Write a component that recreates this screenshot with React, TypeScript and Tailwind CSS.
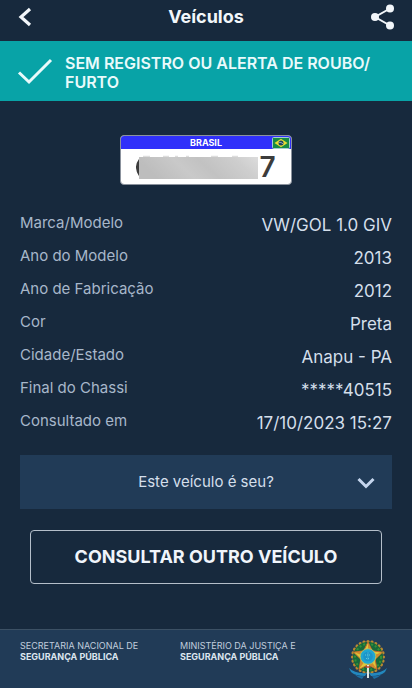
const details = [
  { label: "Marca/Modelo", value: "VW/GOL 1.0 GIV" },
  { label: "Ano do Modelo", value: "2013" },
  { label: "Ano de Fabricação", value: "2012" },
  { label: "Cor", value: "Preta" },
  { label: "Cidade/Estado", value: "Anapu - PA" },
  { label: "Final do Chassi", value: "*****40515" },
  { label: "Consultado em", value: "17/10/2023 15:27" },
]

function BrazilFlag() {
  return (
    <svg viewBox="0 0 18 12" className="h-3 w-[18px]" aria-hidden="true">
      <rect x="0.5" y="0.5" width="17" height="11" rx="1" fill="#168b45" stroke="#a5cdd0" />
      <path d="M9 1.8 15.5 6 9 10.2 2.5 6Z" fill="#e5dc35" />
      <circle cx="9" cy="6" r="2.5" fill="#1d4260" />
      <path d="M6.8 5.3q2.5-.3 4.3 1.6" fill="none" stroke="#cfe0e8" strokeWidth="0.6" />
    </svg>
  )
}

function CoatOfArms() {
  const beads = Array.from({ length: 24 }, (_, i) => i * 15)

  return (
    <svg viewBox="0 0 40 42" className="h-[42px] w-10" role="img" aria-label="Brasão da República">
      {beads.map((angle) => (
        <circle key={angle} cx="20" cy="3.5" r="1.6" fill="#b98a2f" transform={`rotate(${angle} 20 19)`} />
      ))}
      <circle cx="20" cy="19" r="15" fill="#17693a" />
      <circle cx="20" cy="19" r="13" fill="none" stroke="#348f38" strokeWidth="2" strokeDasharray="2 2" />
      <path d="M20 4 24.3 12.8 34.5 14.2 27.2 21.3 29 31.5 20 26.8 11 31.5 12.8 21.3 5.5 14.2 15.7 12.8Z" fill="#dfc73a" stroke="#c0652c" strokeWidth="1" />
      <path d="M20 5 20 19 24.3 12.8ZM33.5 14.5 20 19 27.2 21.3ZM28.5 30.5 20 19 20 26.8ZM11.5 30.5 20 19 12.8 21.3ZM6.5 14.5 20 19 15.7 12.8Z" fill="#d08a2d" />
      <circle cx="20" cy="18.5" r="7.8" fill="#20a6d2" stroke="#b8c85a" strokeWidth="0.8" />
      <circle cx="20" cy="18.5" r="4.8" fill="#1c94c8" />
      <path d="M20 14.5v8M17 17h6M18 20.5h4" stroke="#5cc8dc" strokeWidth="1" strokeDasharray="1 1" />
      <path d="M1 30q6 6 18 5l-2 3Q7 38 3 34ZM39 30q-6 6-18 5l2 3q10 0 14-4Z" fill="#2388bd" />
      <path d="M6 36q5 3 10 2l-2 3q-4-1-8-5ZM34 36q-5 3-10 2l2 3q4-1 8-5Z" fill="#1c70a5" />
      <path d="M20 27v13" stroke="#dde7e6" strokeWidth="2" />
      <path d="M17.5 29h5" stroke="#c94932" strokeWidth="1.5" />
    </svg>
  )
}

function LicensePlate() {
  return (
    <div className="mx-auto h-[50px] w-[172px] overflow-hidden rounded border border-[#8b929d] bg-white">
      <div className="grid h-[13px] grid-cols-[1fr_auto_1fr] items-center bg-[#3030fa]">
        <span className="col-start-2 text-[9px] leading-3 font-bold text-white">BRASIL</span>
        <div className="flex justify-end pr-px">
          <BrazilFlag />
        </div>
      </div>
      <div className="flex h-9 items-center justify-end pr-[14px] text-[#3c3c3c]">
        <svg viewBox="0 0 122 30" className="h-[30px] w-[122px]" aria-hidden="true">
          <defs>
            <linearGradient id="plateMask" x1="0" x2="1" y1="0.2" y2="0">
              <stop offset="0" stopColor="#bdbdbd" />
              <stop offset="0.3" stopColor="#c9c9c9" />
              <stop offset="0.5" stopColor="#c2c2c2" />
              <stop offset="0.8" stopColor="#cecece" />
              <stop offset="1" stopColor="#dcdcdc" />
            </linearGradient>
          </defs>
          <path d="M4 8Q-1 15 4 23" fill="none" stroke="#3c3c3c" strokeWidth="3" />
          <path d="M7 4.5h7M27 4.5h6M39 4.5h3M50 4.5h3M75 4.5h7M96 4.5h6" stroke="#dddddd" strokeWidth="1.5" />
          <rect x="3" y="5" width="119" height="22" fill="url(#plateMask)" />
        </svg>
        <span className="w-[19px] text-center text-[28px] leading-9 font-semibold">7</span>
      </div>
    </div>
  )
}

export default function App() {
  return (
    <div className="flex min-h-screen flex-col bg-[#17293d] font-['Inter',sans-serif] text-[#d4dfeb]">
      <header className="grid h-[41px] grid-cols-[1fr_auto_1fr] items-start px-4 text-[#f2f6fa]">
        <button type="button" aria-label="Voltar" className="mt-[7px] h-5 w-5 justify-self-start">
          <svg viewBox="0 0 20 20" className="h-5 w-5" fill="none" stroke="currentColor" strokeWidth="3.2">
            <path d="M14 2 5 10l9 8" />
          </svg>
        </button>
        <h1 className="mt-[5px] text-lg leading-6 font-bold">Veículos</h1>
        <button type="button" aria-label="Compartilhar" className="mt-1 h-[26px] w-[26px] justify-self-end">
          <svg viewBox="0 0 26 26" className="h-[26px] w-[26px]" fill="currentColor">
            <path d="M20 4.5 5 13l15 8.5" fill="none" stroke="currentColor" strokeWidth="2" />
            <circle cx="20" cy="4.5" r="4" />
            <circle cx="5" cy="13" r="4" />
            <circle cx="20" cy="21.5" r="4" />
          </svg>
        </button>
      </header>

      <section className="flex min-h-[60px] items-center gap-3 bg-[#08a3a7] pr-6 pl-[17px] text-[#e9fafb]">
        <svg viewBox="0 0 36 28" className="h-7 w-9 shrink-0" fill="none" stroke="currentColor" strokeWidth="3" aria-hidden="true">
          <path d="M2 15.5 12 25 34 3" />
        </svg>
        <p className="pt-1 text-base leading-[19px] font-semibold">SEM REGISTRO OU ALERTA DE ROUBO/ FURTO</p>
      </section>

      <main className="px-5 pt-[34px] pb-11">
        <LicensePlate />

        <dl className="mt-6">
          {details.map((item) => (
            <div key={item.label} className="flex h-[33px] items-start justify-between">
              <dt className="text-[15px] leading-7 text-[#a7b7ca]">{item.label}</dt>
              <dd className="text-[17px] leading-8">{item.value}</dd>
            </div>
          ))}
        </dl>

        <button
          type="button"
          aria-expanded="false"
          className="mt-[15px] grid h-[54px] w-full grid-cols-[1fr_auto_1fr] items-center bg-[#213b57] px-4"
        >
          <span className="col-start-2 text-[15px]">Este veículo é seu?</span>
          <svg viewBox="0 0 20 20" className="h-5 w-5 justify-self-end" fill="none" stroke="#c5d5ed" strokeWidth="3" aria-hidden="true">
            <path d="m2.5 7 7.5 7.5L17.5 7" />
          </svg>
        </button>

        <div className="mt-[21px] px-[10px]">
          <button type="button" className="h-[54px] w-full rounded border border-[#b5bfca] text-lg font-bold text-[#f0f5fb]">
            CONSULTAR OUTRO VEÍCULO
          </button>
        </div>
      </main>

      <footer className="mt-auto flex h-[59px] items-start justify-between border-t border-[#3c5064] bg-[#213b57] pr-6 pl-5 text-[9px] leading-[11px] text-[#c0cddd]">
        <p className="mt-[10px] w-40 shrink-0">
          SECRETARIA NACIONAL DE
          <strong className="block font-bold text-[#dce5ef]">SEGURANÇA PÚBLICA</strong>
        </p>
        <p className="mt-[10px] flex-1">
          MINISTÉRIO DA JUSTIÇA E
          <strong className="block font-bold text-[#dce5ef]">SEGURANÇA PÚBLICA</strong>
        </p>
        <div className="mt-2">
          <CoatOfArms />
        </div>
      </footer>
    </div>
  )
}
